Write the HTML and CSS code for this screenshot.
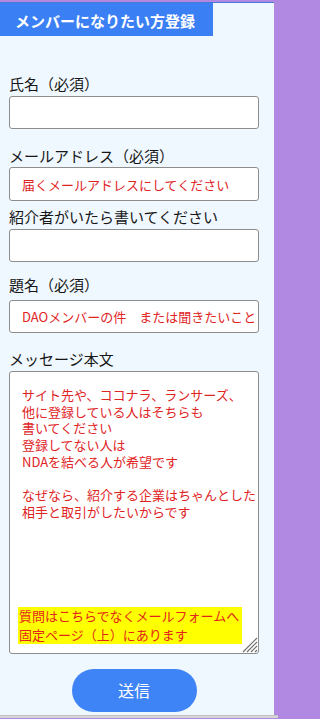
FILE: index.html
```html
<!DOCTYPE html>
<html lang="ja">
<head>
<meta charset="utf-8">
<title>メンバー登録</title>
<link rel="stylesheet" href="styles.css">
</head>
<body>
<div class="page">
  <div class="panel">
    <h2 class="title">メンバーになりたい方登録</h2>
    <form class="form">
      <label class="label l1">氏名（必須）</label>
      <input class="field f1" type="text">
      <label class="label l2">メールアドレス（必須）</label>
      <input class="field f2" type="email" placeholder="届くメールアドレスにしてください">
      <label class="label l3">紹介者がいたら書いてください</label>
      <input class="field f3" type="text">
      <label class="label l4">題名（必須）</label>
      <input class="field f4" type="text" placeholder="DAOメンバーの件　または聞きたいこと">
      <label class="label l5">メッセージ本文</label>
      <div class="msg-wrap">
        <textarea class="msg" placeholder="サイト先や、ココナラ、ランサーズ、&#10;他に登録している人はそちらも&#10;書いてください&#10;登録してない人は&#10;NDAを結べる人が希望です&#10;&#10;なぜなら、紹介する企業はちゃんとした&#10;相手と取引がしたいからです"></textarea>
        <div class="note">質問はこちらでなくメールフォームへ<br>固定ページ（上）にあります</div>
        <svg class="grip" width="18" height="18" viewBox="0 0 18 18">
          <path d="M3 17 L17 3 M7 17 L17 7 M11 17 L17 11 M15 17 L17 15" stroke="#6f6f6f" stroke-width="1.2" fill="none"/>
        </svg>
      </div>
      <button class="submit" type="button">送信</button>
    </form>
  </div>
  <div class="bottom-bar"></div>
</div>
</body>
</html>
```

FILE: styles.css
```css
html, body {
  margin: 0;
  padding: 0;
}
body {
  background: #b189e2;
  font-family: "Noto Sans CJK JP", "Noto Sans", sans-serif;
  color: #161616;
  width: 278px;
  height: 719px;
  overflow: hidden;
}
.page {
  display: flex;
  flex-direction: column;
  height: 719px;
}
.panel {
  width: 274px;
  margin-top: 2px;
  border-top: 1px solid #4a78d8;
  background: #f0f8ff;
  height: 713px;
  box-sizing: border-box;
}
.title {
  margin: 0;
  width: 213px;
  height: 33px;
  box-sizing: border-box;
  background: #3b7ff5;
  color: #fff;
  font-size: 15px;
  font-weight: 700;
  line-height: 33px;
  padding: 1px 0 0 15px;
  white-space: nowrap;
}
.form {
  display: flex;
  flex-direction: column;
  padding-left: 9px;
  width: 250px;
}
.label {
  display: block;
  font-size: 15px;
  line-height: 20px;
  height: 20px;
  white-space: nowrap;
}
.l1 { margin-top: 38px; }
.l2 { margin-top: 17px; }
.l3 { margin-top: 6px; }
.l4 { margin-top: 13px; }
.l5 { margin-top: 16px; }
.field {
  display: block;
  width: 250px;
  height: 33px;
  box-sizing: border-box;
  border: 1px solid #8d8d8d;
  border-radius: 3px;
  background: #fff;
  padding: 0 4px 0 12px;
  font-family: "Noto Sans CJK JP", "Noto Sans", sans-serif;
  font-size: 13px;
  margin: 2px 0 0 0;
  outline: none;
}
.f2 { margin-top: 1px; height: 34px; }
.f4 { margin-top: 5px; }
.field::placeholder {
  color: #e0241f;
  opacity: 1;
}
.msg-wrap {
  position: relative;
  margin-top: 2px;
  width: 250px;
  height: 283px;
}
.msg {
  display: block;
  width: 250px;
  height: 283px;
  box-sizing: border-box;
  border: 1px solid #8d8d8d;
  border-radius: 3px;
  background: #fff;
  padding: 15px 0 10px 12px;
  font-family: "Noto Sans CJK JP", "Noto Sans", sans-serif;
  font-size: 13px;
  line-height: 16.7px;
  margin: 0;
  outline: none;
  resize: none;
}
.msg::placeholder {
  color: #e0241f;
  opacity: 1;
}
.note {
  position: absolute;
  left: 9px;
  top: 236px;
  width: 224px;
  box-sizing: border-box;
  background: #ffff00;
  color: #e2261c;
  font-size: 13px;
  line-height: 18.5px;
  padding-left: 1px;
  white-space: nowrap;
}
.grip {
  position: absolute;
  right: 1px;
  bottom: 1px;
}
.submit {
  align-self: center;
  margin-top: 15px;
  width: 125px;
  height: 43px;
  border: none;
  border-radius: 22px;
  background: #3f84f7;
  color: #fff;
  font-family: "Noto Sans CJK JP", "Noto Sans", sans-serif;
  font-size: 16px;
  line-height: 43px;
  padding: 0;
}
.bottom-bar {
  height: 3px;
  background: #d6d6d6;
  border-top: 1px solid #c4c4c4;
  box-sizing: border-box;
}
```
